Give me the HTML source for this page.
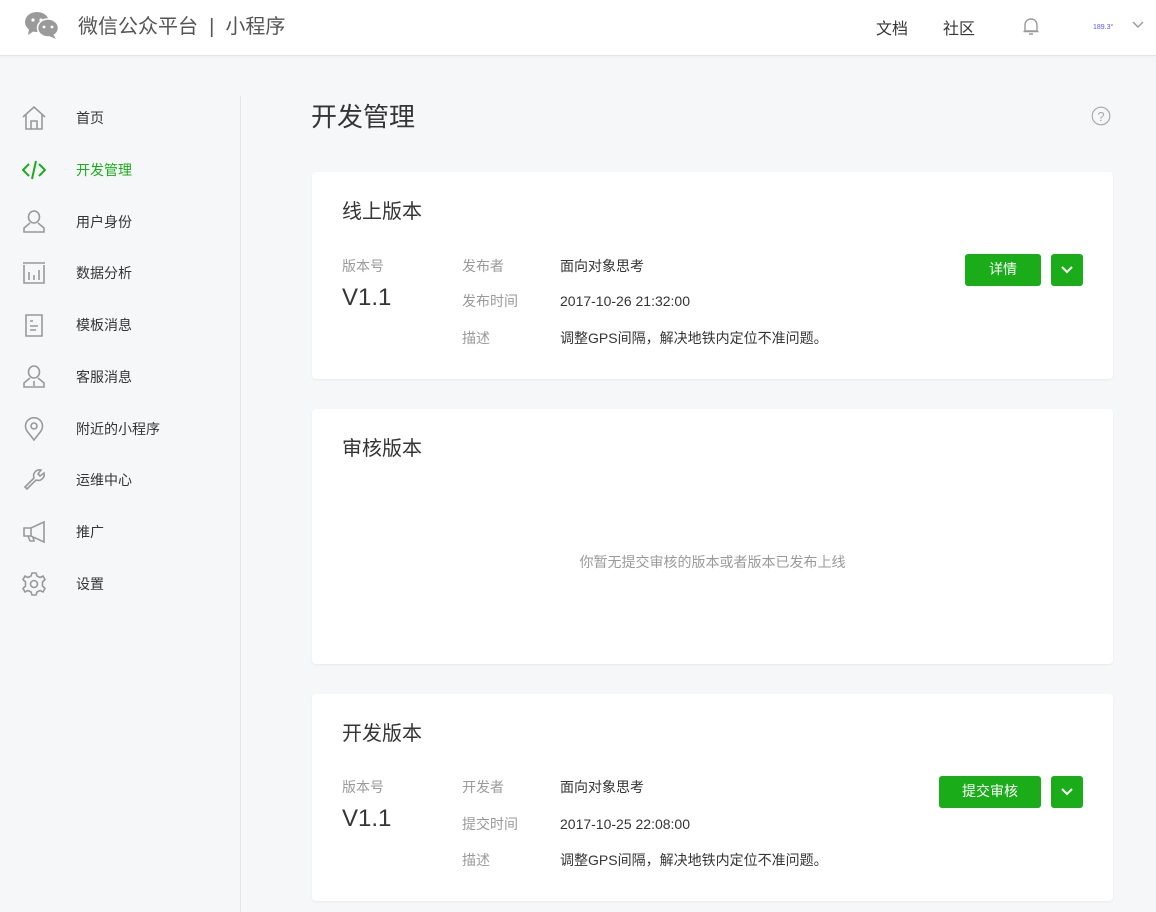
<!DOCTYPE html>
<html><head><meta charset="utf-8"><style>
*{margin:0;padding:0;box-sizing:border-box}
body{width:1156px;height:912px;overflow:hidden;background:#f6f7f9;font-family:"Liberation Sans","Noto Sans CJK SC",sans-serif;color:#353535;position:relative}
.hd{position:absolute;left:0;top:0;width:1156px;height:56px;background:#fff;border-bottom:1px solid #e5e5e5;box-shadow:0 1px 2px rgba(0,0,0,.04)}
.abs{position:absolute}
.nav{position:absolute;left:0;width:240px;height:52px}
.nav svg{position:absolute;left:22px;top:14px}
.nav span{position:absolute;left:76px;top:16px;font-size:14px;color:#353535}
.sep{position:absolute;left:240px;top:96px;width:1px;height:816px;background:#e4e6ea}
.card{position:absolute;left:312px;width:801px;background:#fff;border-radius:4px;box-shadow:0 1px 2px rgba(0,0,0,.06)}
.ct{position:absolute;left:30px;top:23px;font-size:20px;color:#353535}
.lab{position:absolute;font-size:14px;color:#9a9a9a}
.val{position:absolute;font-size:14px;color:#353535}
.ver{position:absolute;left:30px;font-size:24px;color:#353535}
.btn{position:absolute;height:32px;background:#1aad19;border-radius:3px;color:#fff;font-size:14px;text-align:center;line-height:31px}
</style></head><body>
<div class="hd">
<svg class="abs" style="left:24px;top:11px" width="35" height="28" viewBox="0 0 35 28"><ellipse cx="13" cy="11" rx="12" ry="10" fill="#9a9a9a"/><path d="M5 18 L4 24 L10 20Z" fill="#9a9a9a"/><ellipse cx="24" cy="17" rx="10.5" ry="9" fill="#9a9a9a" stroke="#fff" stroke-width="1.5"/><path d="M29 23 L32 28 L25 25Z" fill="#9a9a9a"/><circle cx="9" cy="9" r="1.6" fill="#fff"/><circle cx="17" cy="9" r="1.6" fill="#fff"/><circle cx="20" cy="16" r="1.4" fill="#fff"/><circle cx="28" cy="16" r="1.4" fill="#fff"/></svg>
<div class="abs" style="left:78px;top:10px;font-size:20px;color:#555">微信公众平台&nbsp;&nbsp;|&nbsp;&nbsp;小程序</div>
<div class="abs" style="left:876px;top:15px;font-size:16px;color:#353535">文档</div>
<div class="abs" style="left:943px;top:15px;font-size:16px;color:#353535">社区</div>
<svg class="abs" style="left:1021px;top:16px" width="20" height="20" viewBox="0 0 20 20"><path d="M4 15 V9 a6 6 0 0 1 12 0 V15 Z M2.5 15.5 H17.5 M8 18 H12" fill="none" stroke="#999" stroke-width="1.4"/></svg>
<div class="abs" style="left:1093px;top:24px;font-size:7px;color:#5555ff">189.3°</div>
<svg class="abs" style="left:1132px;top:21px" width="12" height="8" viewBox="0 0 12 8"><path d="M1 1 L6 6 L11 1" fill="none" stroke="#999" stroke-width="1.4"/></svg>
</div>
<div class="sep"></div>
<div class="nav" style="top:92px"><svg width="24" height="24" viewBox="0 0 24 24" fill="none" stroke="#999" stroke-width="1.6"><path d="M1 11 L12 1 L23 11 M4 9 V23 H20 V9 M9 23 V15 H15 V23"/></svg><span>首页</span></div>
<div class="nav" style="top:144px"><svg width="24" height="24" viewBox="0 0 24 24" fill="none" stroke="#1aad19" stroke-width="2"><path d="M7 6 L1 12 L7 18 M17 6 L23 12 L17 18 M14 3 L10 21"/></svg><span style="color:#1aad19">开发管理</span></div>
<div class="nav" style="top:196px"><svg width="24" height="24" viewBox="0 0 24 24" fill="none" stroke="#999" stroke-width="1.6"><path d="M12 1 a5.5 6 0 0 1 0 12 a5.5 6 0 0 1 0 -12 M8 13 L2 18 V22 H22 V18 L16 13"/></svg><span>用户身份</span></div>
<div class="nav" style="top:247px"><svg width="24" height="24" viewBox="0 0 24 24" fill="none" stroke="#999" stroke-width="1.6"><path d="M1 2 H23 M2 4 V22 H22 V4 M7 11 V19 M12 14 V19 M17 9 V19"/></svg><span>数据分析</span></div>
<div class="nav" style="top:299px"><svg width="24" height="24" viewBox="0 0 24 24" fill="none" stroke="#999" stroke-width="1.6"><path d="M4 2 H20 V23 H4 Z M8 8 H11 M8 13 H16 M8 17 H14"/></svg><span>模板消息</span></div>
<div class="nav" style="top:351px"><svg width="24" height="24" viewBox="0 0 24 24" fill="none" stroke="#999" stroke-width="1.6"><path d="M12 1 a5.5 6 0 0 1 0 12 a5.5 6 0 0 1 0 -12 M8 13 L2 18 V22 H22 V18 L16 13 M12 16 V21"/></svg><span>客服消息</span></div>
<div class="nav" style="top:403px"><svg width="24" height="24" viewBox="0 0 24 24" fill="none" stroke="#999" stroke-width="1.6"><path d="M12 23 L5 14 A8.5 8.5 0 1 1 19 14 Z"/><circle cx="12" cy="9" r="3"/></svg><span>附近的小程序</span></div>
<div class="nav" style="top:454px"><svg width="24" height="24" viewBox="0 0 24 24" fill="none" stroke="#999" stroke-width="1.6"><path d="M3 19 L12 10 A6 6 0 0 1 19 2 L16 6 L18 8 L22 5 A6 6 0 0 1 14 12 L5 21 Z"/></svg><span>运维中心</span></div>
<div class="nav" style="top:506px"><svg width="24" height="24" viewBox="0 0 24 24" fill="none" stroke="#999" stroke-width="1.6"><path d="M2 8 H9 L22 2 V22 L9 16 H2 Z M9 8 V16 M6 16 L8 21 H12 L11 17"/></svg><span>推广</span></div>
<div class="nav" style="top:558px"><svg width="24" height="24" viewBox="0 0 24 24" fill="none" stroke="#999" stroke-width="1.6"><path d="M10 1 H14 L15 4 L18 5.5 L21 4 L23 7.5 L20.5 10 V14 L23 16.5 L21 20 L18 18.5 L15 20 L14 23 H10 L9 20 L6 18.5 L3 20 L1 16.5 L3.5 14 V10 L1 7.5 L3 4 L6 5.5 L9 4 Z"/><circle cx="12" cy="12" r="3.5"/></svg><span>设置</span></div>

<div class="abs" style="left:311px;top:97px;font-size:26px;color:#353535">开发管理</div>
<svg class="abs" style="left:1091px;top:106px" width="20" height="20" viewBox="0 0 20 20"><circle cx="10" cy="10" r="8.8" fill="none" stroke="#aaa" stroke-width="1.2"/><text x="10" y="15" text-anchor="middle" font-size="13" fill="#aaa" font-family="Liberation Sans">?</text></svg>

<div class="card" style="top:172px;height:207px">
<div class="ct">线上版本</div>
<div class="lab" style="left:30px;top:84px">版本号</div>
<div class="ver" style="top:112px">V1.1</div>
<div class="lab" style="left:150px;top:84px">发布者</div><div class="val" style="left:248px;top:84px">面向对象思考</div>
<div class="lab" style="left:150px;top:119px">发布时间</div><div class="val" style="left:248px;top:121px">2017-10-26 21:32:00</div>
<div class="lab" style="left:150px;top:156px">描述</div><div class="val" style="left:248px;top:156px">调整GPS间隔，解决地铁内定位不准问题。</div>
<div class="btn" style="left:653px;top:82px;width:76px">详情</div>
<div class="btn" style="left:739px;top:82px;width:32px"><svg width="12" height="8" viewBox="0 0 12 8" style="margin-top:12px;display:block;margin-left:10px"><path d="M1 1 L6 6 L11 1" fill="none" stroke="#fff" stroke-width="2"/></svg></div>
</div>

<div class="card" style="top:409px;height:255px">
<div class="ct">审核版本</div>
<div class="abs" style="left:0;width:801px;top:143px;text-align:center;font-size:14px;color:#9a9a9a">你暂无提交审核的版本或者版本已发布上线</div>
</div>

<div class="card" style="top:694px;height:207px">
<div class="ct">开发版本</div>
<div class="lab" style="left:30px;top:83px">版本号</div>
<div class="ver" style="top:111px">V1.1</div>
<div class="lab" style="left:150px;top:83px">开发者</div><div class="val" style="left:248px;top:83px">面向对象思考</div>
<div class="lab" style="left:150px;top:120px">提交时间</div><div class="val" style="left:248px;top:122px">2017-10-25 22:08:00</div>
<div class="lab" style="left:150px;top:156px">描述</div><div class="val" style="left:248px;top:156px">调整GPS间隔，解决地铁内定位不准问题。</div>
<div class="btn" style="left:627px;top:82px;width:102px">提交审核</div>
<div class="btn" style="left:739px;top:82px;width:32px"><svg width="12" height="8" viewBox="0 0 12 8" style="margin-top:12px;display:block;margin-left:10px"><path d="M1 1 L6 6 L11 1" fill="none" stroke="#fff" stroke-width="2"/></svg></div>
</div>
</body></html>
